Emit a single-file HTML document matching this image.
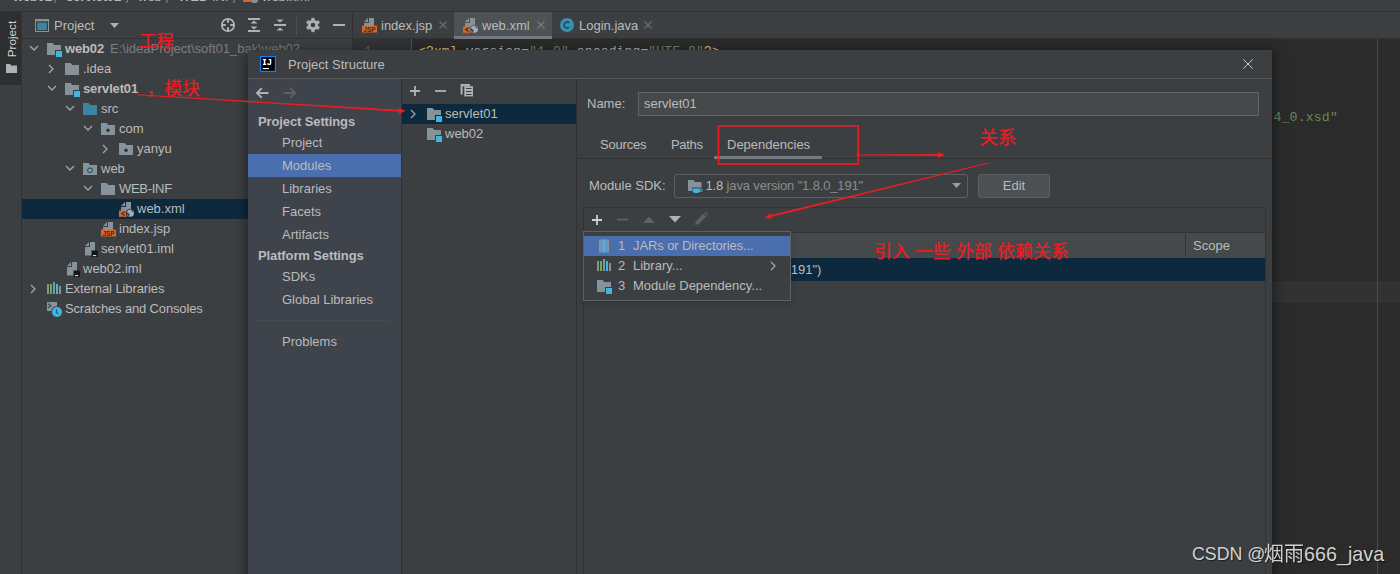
<!DOCTYPE html>
<html lang="en">
<head>
<meta charset="utf-8">
<title>Project Structure</title>
<style>
html,body{margin:0;padding:0}
body{width:1400px;height:574px;overflow:hidden;position:relative;background:#3c3f41;color:#bbbbbb;font-family:"Liberation Sans",sans-serif;font-size:13px;line-height:20px;-webkit-font-smoothing:antialiased}
.a{position:absolute}
.t{position:absolute;white-space:nowrap;line-height:20px;height:20px}
.b{font-weight:bold;letter-spacing:-.15px}
.g{color:#7d7d7d}
svg{position:absolute;overflow:visible}
.ic{width:16px;height:16px}
.row{position:absolute;left:22px;width:226px;height:20px}
.mono{font-family:"Liberation Mono",monospace;font-size:13px}
.side{position:absolute;left:34px;white-space:nowrap;line-height:23px;height:23px}
.sideh{position:absolute;left:10px;white-space:nowrap;font-weight:bold;line-height:20px;letter-spacing:-.12px}
</style>
</head>
<body>
<svg width="0" height="0" style="position:absolute">
<defs>
<symbol id="folder" viewBox="0 0 16 16"><path d="M1 2h5.6l1.6 2H15v10H1z" fill="#87939a"/></symbol>
<symbol id="modfolder" viewBox="0 0 16 16"><path d="M1 2h5.6l1.6 2H15v5H9v5H1z" fill="#87939a"/><rect x="10" y="10" width="6" height="6" fill="#40b6e0"/></symbol>
<symbol id="srcfolder" viewBox="0 0 16 16"><path d="M1 2h5.6l1.6 2H15v10H1z" fill="#3b85a3"/></symbol>
<symbol id="pkgfolder" viewBox="0 0 16 16"><path d="M1 2h5.6l1.6 2H15v10H1z" fill="#87939a"/><circle cx="8" cy="9.300" r="1.700" fill="#2f3234"/></symbol>
<symbol id="webfolder" viewBox="0 0 16 16"><path d="M1 2h5.6l1.6 2H15v10H1z" fill="#87939a"/><circle cx="8" cy="9.300" r="2.700" fill="#3c3f41"/><circle cx="8" cy="9.300" r="1.800" fill="#40b6e0"/></symbol>
<symbol id="chev-d" viewBox="0 0 16 16"><path d="M4 6l4 4 4-4" fill="none" stroke="#a4a6a8" stroke-width="1.3"/></symbol>
<symbol id="chev-r" viewBox="0 0 16 16"><path d="M6 4l4 4-4 4" fill="none" stroke="#a4a6a8" stroke-width="1.3"/></symbol>
<symbol id="xmlfile" viewBox="0 0 16 16"><path d="M7 1L3 5h4z" fill="#87939a"/><path d="M8 1h5v9H3V6h5z" fill="#87939a"/><rect x="1" y="9.500" width="8.300" height="6.300" fill="#d8672b"/><path d="M6.800 10.700L3.600 12.600l3.200 1.900" fill="none" stroke="#3a2a20" stroke-width="1.100"/><circle cx="12.300" cy="12.200" r="4.500" fill="currentColor"/><circle cx="12.300" cy="12.200" r="3.600" fill="#a3b0b8"/><path d="M9.200 10.700a3.600 3.600 0 0 0 1.900 4.900c-.3-1 .9-1.400.6-2.300s-1.700-1.300-2.500-2.600z" fill="#3a4852"/><path d="M12.300 8.700c.3.800 1.200.9 1.400 1.700s.900 1 1.700.8a3.600 3.600 0 0 0-3.100-2.500z" fill="#3a4852"/></symbol>
<symbol id="jspfile" viewBox="0 0 16 16"><path d="M7 1L3.500 4.500V5H7z" fill="#87939a"/><path d="M8 1h5v8H3V6h5z" fill="#87939a"/><rect x="1" y="8.700" width="15" height="6.800" fill="#d8672b"/><text x="8.500" y="14.500" font-family="Liberation Sans" font-weight="bold" font-size="6.400" text-anchor="middle" fill="#3a2a20">JSP</text></symbol>
<symbol id="imlfile" viewBox="0 0 16 16"><path d="M7 1L3 5h4z" fill="#87939a"/><path d="M8 1h5v13.500H3V6h5z" fill="#87939a"/><rect x="9.500" y="9.500" width="7" height="6.700" fill="#161616"/><rect x="11" y="14" width="3.200" height="1.100" fill="#d8d8d8"/></symbol>
<symbol id="libs" viewBox="0 0 16 16"><rect x="1" y="3" width="2" height="10" fill="#87939a"/><rect x="4" y="3" width="2" height="10" fill="#62b543"/><rect x="7" y="1" width="2" height="12" fill="#87939a"/><rect x="10" y="3" width="2" height="10" fill="#40b6e0"/><rect x="13" y="5" width="2" height="8" fill="#87939a"/></symbol>
</defs>
</svg>

<!-- ===== top breadcrumb bar (cut off) ===== -->
<div class="a" style="left:0;top:0;width:1400px;height:11px;background:#3c3f41;overflow:hidden">
  <div class="t b" style="left:13px;top:-13px;font-size:13px;color:#bbb">web02</div>
  <div class="t" style="left:54px;top:-11px;color:#888">/</div>
  <div class="t b" style="left:66px;top:-13px;">servlet01</div>
  <div class="t" style="left:126px;top:-11px;color:#888">/</div>
  <div class="t" style="left:138px;top:-13px;">web</div>
  <div class="t" style="left:166px;top:-11px;color:#888">/</div>
  <div class="t" style="left:178px;top:-13px;">WEB-INF</div>
  <div class="t" style="left:233px;top:-11px;color:#888">/</div>
  <div class="a" style="left:243px;top:0;width:8px;height:2px;background:#d8672b"></div>
  <div class="a" style="left:251px;top:0;width:7px;height:3px;background:#87939a;border-radius:0 0 3px 3px"></div>
  <div class="t" style="left:262px;top:-13px;">web.xml</div>
</div>
<div class="a" style="left:0;top:11px;width:1400px;height:1px;background:#323232"></div>

<!-- ===== left tool strip ===== -->
<div class="a" style="left:0;top:12px;width:21px;height:562px;background:#3c3f41"></div>
<div class="a" style="left:0;top:12px;width:21px;height:73px;background:#2d2f30"></div>
<div class="a" style="left:21px;top:12px;width:1px;height:562px;background:#323232"></div>
<div class="a" style="left:0;top:0;width:0;height:0"><div class="t" style="left:-7.700px;top:29.300px;width:40px;text-align:center;font-size:11.700px;color:#d4d4d4;transform:rotate(-90deg);transform-origin:center center;">Project</div></div>
<svg style="left:6px;top:64px" width="11" height="9" viewBox="0 0 12 10" preserveAspectRatio="none"><path d="M0 0h4.4l1.2 1.6H12V10H0z" fill="#afb1b3"/></svg>

<!-- ===== project tool window ===== -->
<div class="a" id="proj" style="left:22px;top:12px;width:330px;height:562px;background:#3c3f41"></div>
<div class="a" style="left:22px;top:38px;width:330px;height:1px;background:#323232"></div>
<div class="a" style="left:352px;top:12px;width:1px;height:562px;background:#323232"></div>
<!-- toolbar -->
<svg style="left:35px;top:19px" width="14" height="13" viewBox="0 0 14 13"><rect x=".5" y=".5" width="13" height="12" fill="none" stroke="#87939a"/><rect x="0" y="0" width="14" height="2.300" fill="#87939a"/><rect x="2.200" y="3.600" width="9.600" height="7.400" fill="#3b85a3"/></svg>
<div class="t" style="left:54px;top:16px">Project</div>
<svg style="left:110px;top:23px" width="9" height="5" viewBox="0 0 9 5"><path d="M0 0h9L4.5 5z" fill="#afb1b3"/></svg>
<!-- locate -->
<svg style="left:220px;top:17px" width="16" height="16" viewBox="0 0 16 16"><circle cx="8" cy="8" r="6.2" fill="none" stroke="#afb1b3" stroke-width="1.8"/><path d="M8 1.500v4.300M8 10.200v4.300M1.500 8h4.300M10.200 8h4.300" stroke="#afb1b3" stroke-width="2"/></svg>
<!-- expand all -->
<svg style="left:246px;top:17px" width="16" height="16" viewBox="0 0 16 16"><path d="M2 2h12M2 14h12" stroke="#afb1b3" stroke-width="2"/><path d="M8 3.600l3.600 3H4.400zM8 12.400l3.600-3H4.400z" fill="#afb1b3"/></svg>
<!-- collapse all -->
<svg style="left:272px;top:17px" width="16" height="16" viewBox="0 0 16 16"><path d="M2 8h12" stroke="#afb1b3" stroke-width="2"/><path d="M8 5.500l3.600-3.100H4.400zM8 10.500l3.600 3.100H4.400z" fill="#afb1b3"/></svg>
<div class="a" style="left:296px;top:15px;width:1px;height:20px;background:#515151"></div>
<!-- gear -->
<svg style="left:305px;top:17px" width="16" height="16" viewBox="0 0 16 16"><path d="M6.440 3.360L6.710 1.220L9.290 1.220L9.560 3.360L11.240 4.320L13.220 3.490L14.520 5.730L12.800 7.030L12.800 8.970L14.520 10.270L13.220 12.510L11.240 11.680L9.560 12.640L9.290 14.780L6.710 14.780L6.440 12.640L4.760 11.680L2.780 12.510L1.480 10.270L3.200 8.970L3.200 7.030L1.480 5.730L2.780 3.490L4.760 4.320z" fill="#afb1b3" stroke="#afb1b3" stroke-width=".6" stroke-linejoin="round"/><circle cx="8" cy="8" r="2.300" fill="#3c3f41"/></svg>
<div class="a" style="left:333px;top:24px;width:12px;height:2px;background:#afb1b3"></div>

<!-- tree -->
<div class="row" style="top:199px;background:#0d293e"></div>
<svg class="ic" style="left:26px;top:40px"><use href="#chev-d"/></svg>
<svg class="ic" style="left:46px;top:41px"><use href="#modfolder"/></svg>
<div class="t b" style="left:65px;top:39px">web02</div>
<div class="t g" style="left:110px;top:39px">E:\ideaProject\soft01_bak\web02</div>

<svg class="ic" style="left:43px;top:61px"><use href="#chev-r"/></svg>
<svg class="ic" style="left:64px;top:61px"><use href="#folder"/></svg>
<div class="t" style="left:83px;top:59px">.idea</div>

<svg class="ic" style="left:44px;top:80px"><use href="#chev-d"/></svg>
<svg class="ic" style="left:64px;top:81px"><use href="#modfolder"/></svg>
<div class="t b" style="left:83px;top:79px">servlet01</div>

<svg class="ic" style="left:62px;top:100px"><use href="#chev-d"/></svg>
<svg class="ic" style="left:82px;top:101px"><use href="#srcfolder"/></svg>
<div class="t" style="left:101px;top:99px">src</div>

<svg class="ic" style="left:80px;top:120px"><use href="#chev-d"/></svg>
<svg class="ic" style="left:100px;top:121px"><use href="#pkgfolder"/></svg>
<div class="t" style="left:119px;top:119px">com</div>

<svg class="ic" style="left:97px;top:141px"><use href="#chev-r"/></svg>
<svg class="ic" style="left:118px;top:141px"><use href="#pkgfolder"/></svg>
<div class="t" style="left:137px;top:139px">yanyu</div>

<svg class="ic" style="left:62px;top:160px"><use href="#chev-d"/></svg>
<svg class="ic" style="left:82px;top:161px"><use href="#webfolder"/></svg>
<div class="t" style="left:101px;top:159px">web</div>

<svg class="ic" style="left:80px;top:180px"><use href="#chev-d"/></svg>
<svg class="ic" style="left:100px;top:181px"><use href="#folder"/></svg>
<div class="t" style="left:119px;top:179px;letter-spacing:-.3px">WEB-INF</div>

<svg class="ic" style="left:118px;top:201px;color:#0d293e"><use href="#xmlfile"/></svg>
<div class="t" style="left:137px;top:199px">web.xml</div>

<svg class="ic" style="left:100px;top:221px"><use href="#jspfile"/></svg>
<div class="t" style="left:119px;top:219px">index.jsp</div>

<svg class="ic" style="left:82px;top:241px"><use href="#imlfile"/></svg>
<div class="t" style="left:101px;top:239px">servlet01.iml</div>

<svg class="ic" style="left:64px;top:261px"><use href="#imlfile"/></svg>
<div class="t" style="left:83px;top:259px">web02.iml</div>

<svg class="ic" style="left:25px;top:281px"><use href="#chev-r"/></svg>
<svg class="ic" style="left:46px;top:281px"><use href="#libs"/></svg>
<div class="t" style="left:65px;top:279px;letter-spacing:-.1px">External Libraries</div>

<svg class="ic" style="left:46px;top:301px" viewBox="0 0 16 16"><path d="M1 1h10v4.200a6 6 0 0 0-5.800 4.800H1z" fill="#87939a"/><path d="M2.300 2.800l2.600 2-2.600 2" fill="none" stroke="#3c3f41" stroke-width="1.100"/><circle cx="11" cy="11" r="5" fill="#40b6e0"/><path d="M10.500 8.300v3.200l1.800 1.500" fill="none" stroke="#2d5a70" stroke-width="1.200"/></svg>
<div class="t" style="left:65px;top:299px;letter-spacing:-.15px">Scratches and Consoles</div>

<!-- ===== editor ===== -->
<div class="a" style="left:353px;top:12px;width:1047px;height:26px;background:#3c3f41"></div>
<div class="a" style="left:353px;top:38px;width:1047px;height:1px;background:#323232"></div>
<div class="a" style="left:454px;top:12px;width:98px;height:27px;background:#4e5254"></div>
<div class="a" style="left:454px;top:36px;width:98px;height:3px;background:#747a80"></div>
<svg class="ic" style="left:361px;top:17px"><use href="#jspfile"/></svg>
<div class="t" style="left:381px;top:16px">index.jsp</div>
<svg style="left:439px;top:21px" width="8" height="8" viewBox="0 0 8 8"><path d="M.5.5l7 7M7.500.5l-7 7" stroke="#6e6e6e" stroke-width="1.1"/></svg>
<svg class="ic" style="left:462px;top:17px;color:#4e5254"><use href="#xmlfile"/></svg>
<div class="t" style="left:482px;top:16px">web.xml</div>
<svg style="left:537px;top:21px" width="8" height="8" viewBox="0 0 8 8"><path d="M.5.5l7 7M7.500.5l-7 7" stroke="#7a7d7f" stroke-width="1.1"/></svg>
<svg style="left:560px;top:18px" width="14" height="14" viewBox="0 0 14 14"><circle cx="7" cy="7" r="7" fill="#3592b5"/><path d="M9.300 4.900A3 3 0 1 0 9.300 9.100" fill="none" stroke="#23393f" stroke-width="1.3"/></svg>
<div class="t" style="left:579px;top:16px">Login.java</div>
<svg style="left:644px;top:21px" width="8" height="8" viewBox="0 0 8 8"><path d="M.5.5l7 7M7.500.5l-7 7" stroke="#6e6e6e" stroke-width="1.1"/></svg>

<div class="a" style="left:353px;top:39px;width:1047px;height:535px;background:#2b2b2b"></div>
<div class="a" style="left:353px;top:39px;width:58px;height:535px;background:#313335"></div>
<div class="a" style="left:411px;top:39px;width:1px;height:535px;background:#555555"></div>
<div class="a" style="left:412px;top:281px;width:988px;height:22px;background:#323232"></div>
<div class="a" style="left:1377px;top:39px;width:1px;height:535px;background:#4b4b4b"></div>
<div class="t mono" style="left:364px;top:42px;color:#606366">1</div>
<div class="t mono" style="left:418px;top:42px;letter-spacing:.14px;color:#e8bf6a">&lt;?<span>xml</span><span style="color:#bababa"> version=</span><span style="color:#6a8759">"1.0"</span><span style="color:#bababa"> encoding=</span><span style="color:#6a8759">"UTF-8"</span>?&gt;</div>
<div class="t mono" style="left:1273.500px;top:107.500px;letter-spacing:.14px;font-size:13.200px;color:#6a8759">4_0.xsd"</div>

<!-- ===== Project Structure dialog ===== -->
<div class="a" id="dlg" style="left:248px;top:50px;width:1024px;height:560px;background:#3c3f41;box-shadow:0 3px 12px 1px rgba(0,0,0,.5)">
  <!-- title bar -->
  <svg style="left:12px;top:6px" width="16" height="16" viewBox="0 0 16 16"><rect x=".6" y=".6" width="14.800" height="14.800" fill="#000" stroke="#1580f5" stroke-width="1.200"/><path d="M2.900 2.900h3.300v1.300H5.300v3.600h.9v1.300H2.900V7.800h.9V4.200h-.9z" fill="#fff"/><path d="M8.600 2.900h2.700v4.300a1.900 1.900 0 0 1-1.900 1.900h-.4a2.100 2.100 0 0 1-2.100-1.500l1.300-.5a.8.8 0 0 0 .8.600h.3a.5.5 0 0 0 .5-.5V4.200H8.600z" fill="#fff"/><rect x="2.900" y="12" width="6.100" height="1.150" fill="#fff"/></svg>
  <div class="t" style="left:40px;top:5px">Project Structure</div>
  <svg style="left:995px;top:9px" width="10" height="10" viewBox="0 0 10 10"><path d="M.3.3l9.400 9.400M9.700.3L.3 9.700" stroke="#c4c4c4" stroke-width="1"/></svg>
  <div class="a" style="left:0;top:28px;width:1024px;height:1px;background:#555759"></div>

  <!-- sidebar -->
  <div class="a" style="left:0;top:29px;width:153px;height:540px;background:#3e434c"></div>
  <div class="a" style="left:153px;top:29px;width:1px;height:540px;background:#323232"></div>
  <svg style="left:7px;top:36px" width="14" height="14" viewBox="0 0 14 14"><path d="M13.500 7H2M6.800 2.200L2 7l4.800 4.800" fill="none" stroke="#afb1b3" stroke-width="1.900"/></svg>
  <svg style="left:35px;top:36px" width="14" height="14" viewBox="0 0 14 14"><path d="M.5 7H12M7.200 2.200L12 7l-4.800 4.800" fill="none" stroke="#5d6164" stroke-width="1.900"/></svg>
  <div class="sideh" style="top:62px">Project Settings</div>
  <div class="side" style="top:81px">Project</div>
  <div class="a" style="left:0;top:104px;width:153px;height:23px;background:#4b6eaf"></div>
  <div class="side" style="top:104px">Modules</div>
  <div class="side" style="top:127px">Libraries</div>
  <div class="side" style="top:150px">Facets</div>
  <div class="side" style="top:173px">Artifacts</div>
  <div class="sideh" style="top:196px">Platform Settings</div>
  <div class="side" style="top:215px">SDKs</div>
  <div class="side" style="top:238px">Global Libraries</div>
  <div class="a" style="left:9px;top:270px;width:132px;height:1px;background:#464b52"></div>
  <div class="side" style="top:280px">Problems</div>

  <!-- module list -->
  <div class="a" style="left:328px;top:29px;width:1px;height:540px;background:#323232"></div>
  <svg style="left:162px;top:36px" width="10" height="10" viewBox="0 0 10 10"><path d="M5 0v10M0 5h10" stroke="#afb1b3" stroke-width="1.800"/></svg>
  <svg style="left:187px;top:36px" width="11" height="10" viewBox="0 0 11 10"><path d="M0 5h11" stroke="#afb1b3" stroke-width="1.800"/></svg>
  <svg style="left:212px;top:33px" width="14" height="15" viewBox="0 0 14 15"><path d="M.6 1H10v2.200H2.600v8.400H.6z" fill="#afb1b3"/><rect x="4.300" y="3.200" width="8.700" height="10.200" fill="#afb1b3"/><path d="M6 5.500h5.500M6 8.500h5.500M6 11.500h5.500" stroke="#3c3f41" stroke-width="1.200"/></svg>
  <div class="a" style="left:154px;top:54px;width:174px;height:20px;background:#0d293e"></div>
  <svg class="ic" style="left:157px;top:56px"><use href="#chev-r"/></svg>
  <svg class="ic" style="left:178px;top:56px"><use href="#modfolder"/></svg>
  <div class="t" style="left:197px;top:54px">servlet01</div>
  <svg class="ic" style="left:178px;top:76px"><use href="#modfolder"/></svg>
  <div class="t" style="left:197px;top:74px">web02</div>

  <!-- right panel -->
  <div class="t" style="left:339px;top:44px">Name:</div>
  <div class="a" style="left:390px;top:42px;width:619px;height:22px;background:#45494a;border:1px solid #646464"></div>
  <div class="t" style="left:396px;top:44px">servlet01</div>

  <div class="t" style="left:352px;top:85px;letter-spacing:-.2px">Sources</div>
  <div class="t" style="left:423px;top:85px;letter-spacing:-.3px">Paths</div>
  <div class="t" style="left:479px;top:85px">Dependencies</div>
  <div class="a" style="left:329px;top:108px;width:695px;height:1px;background:#323232"></div>
  <div class="a" style="left:466px;top:106px;width:108px;height:3px;background:#747a80"></div>

  <div class="t" style="left:341px;top:126px">Module SDK:</div>
  <div class="a" style="left:426px;top:124px;width:292px;height:22px;background:#3c3f41;border:1px solid #5e6060;border-radius:3px"></div>
  <svg class="ic" style="left:439px;top:127px" viewBox="0 0 16 16"><path d="M1 3h5.600l1.600 2h6.300v5.500H5v3.500H1z" fill="#87939a"/><path d="M5.500 11.500h7.500v1.800a2.700 2.700 0 0 1-2.700 2.700H8.200a2.700 2.700 0 0 1-2.700-2.700z" fill="#40b6e0"/><path d="M13 12.200h1.200a1.150 1.150 0 0 1 0 2.300H12.800" fill="none" stroke="#40b6e0" stroke-width="1"/></svg>
  <div class="t" style="left:457.500px;top:126px;letter-spacing:-.15px">1.8 <span style="color:#8c8c8c">java version "1.8.0_191"</span></div>
  <svg style="left:704px;top:133px" width="9" height="5" viewBox="0 0 9 5"><path d="M0 0h9L4.500 5z" fill="#9a9da0"/></svg>
  <div class="a" style="left:730px;top:124px;width:70px;height:22px;background:#4c5052;border:1px solid #5e6060;border-radius:3px"></div>
  <div class="t" style="left:730px;top:126px;width:72px;text-align:center">Edit</div>

  <!-- dependencies panel -->
  <div class="a" style="left:335px;top:157px;width:681px;height:420px;border:1px solid #323232;background:#3c3f41"></div>
  <div class="a" style="left:336px;top:182px;width:681px;height:1px;background:#323232"></div>
  <svg style="left:344px;top:164.500px" width="10" height="10" viewBox="0 0 10 10"><path d="M5 0v10M0 5h10" stroke="#d0d0d0" stroke-width="1.800"/></svg>
  <svg style="left:369px;top:164px" width="11" height="11" viewBox="0 0 11 11"><path d="M0 5.500h11" stroke="#5d6164" stroke-width="1.800"/></svg>
  <svg style="left:395px;top:166px" width="12" height="7" viewBox="0 0 12 7"><path d="M0 7h12L6 .5z" fill="#5d6164"/></svg>
  <svg style="left:421px;top:166px" width="12" height="7" viewBox="0 0 12 7"><path d="M0 0h12L6 6.500z" fill="#afb1b3"/></svg>
  <svg style="left:446px;top:162px" width="14" height="14" viewBox="0 0 14 14"><path d="M1 13l.8-3.500L9.500 1.800l2.700 2.700L4.500 12.200zM10.300 1l1-1 2.700 2.700-1 1z" fill="#5d6164"/></svg>
  <!-- table header -->
  <div class="a" style="left:336px;top:183px;width:681px;height:25px;background:#45494a"></div>
    <div class="a" style="left:937px;top:184px;width:1px;height:22px;background:#323232"></div>
  <div class="t" style="left:945px;top:186px">Scope</div>
  <div class="a" style="left:336px;top:208px;width:681px;height:23px;background:#0d293e"></div>
  <svg class="ic" style="left:374px;top:211px" viewBox="0 0 16 16"><path d="M1 2h5.600l1.600 2H15v10H1z" fill="#87939a"/></svg>
  <div class="t" style="left:403px;top:210px">1.8 (java version "1.8.0_191")</div>

  <!-- popup -->
  <div class="a" style="left:335px;top:181px;width:206px;height:68px;background:#3c3f41;border:1px solid #5f6264;box-shadow:0 2px 5px rgba(0,0,0,.2)"></div>
  <div class="a" style="left:336px;top:186px;width:206px;height:20px;background:#4b6eaf"></div>
  <svg class="ic" style="left:348px;top:188px" viewBox="0 0 16 16"><rect x="3" y="1.500" width="2.500" height="13" fill="#87939a"/><rect x="10.500" y="1.500" width="2.500" height="13" fill="#87939a"/><rect x="5.500" y="1.500" width="5" height="13" fill="#5da3cf"/><path d="M8 1.500v13" stroke="#40b6e0" stroke-width="2.200" stroke-dasharray="1 1"/></svg>
  <div class="t" style="left:370px;top:186px">1</div>
  <div class="t" style="left:385px;top:186px;letter-spacing:-.1px">JARs or Directories...</div>
  <svg class="ic" style="left:348px;top:208px"><use href="#libs"/></svg>
  <div class="t" style="left:370px;top:206px">2</div>
  <div class="t" style="left:385px;top:206px">Library...</div>
  <svg class="ic" style="left:517px;top:208px"><use href="#chev-r"/></svg>
  <svg class="ic" style="left:348px;top:228px"><use href="#modfolder"/></svg>
  <div class="t" style="left:370px;top:226px">3</div>
  <div class="t" style="left:385px;top:226px">Module Dependency...</div>
</div>

<!-- ===== red annotations ===== -->
<svg style="left:0;top:0" width="1400" height="574" viewBox="0 0 1400 574">
  <g stroke="#ed1c24" fill="none" stroke-width="1.300">
                <rect x="718.500" y="125.900" width="139.700" height="38.200" stroke-width="1.600"/>
  </g>
  <g fill="#ed1c24">
    <path d="M136.97 95.25L399.94 111.80L400.06 109.70L137.03 94.35z"/>
    <path d="M855.50 155.60L939.00 156.10L939.00 153.90L855.50 154.60z"/>
    <path d="M988.41 162.61L768.76 215.53L769.24 217.47L988.59 163.39z"/>
    <path d="M405.600 111.100l-7.200 2.900 .9-3.100-.5-3.200z"/>
    <path d="M945.300 155l-7.600 2.900 .8-2.900-.8-2.900z"/>
    <path d="M764.500 217.700l6.300-4.700-.2 3 1.700 2.700z"/>
  </g>
  <g fill="#ed1c24" stroke="#ed1c24" stroke-width="0.2" font-family="'Liberation Sans','Noto Sans CJK SC',sans-serif">
    <text x="139.3" y="47.3" font-size="17.2">工程</text>
    <text x="146.5" y="95" font-size="17.2">，</text>
    <text x="164.4" y="94.9" font-size="17.8">模块</text>
    <text x="979.5" y="144.1" font-size="18.4">关系</text>
    <text x="874" y="257.9" font-size="17.9"><tspan x="874">引入</tspan> <tspan x="915.1">一些</tspan> <tspan x="956.2">外部</tspan> <tspan x="997.3">依赖关系</tspan></text>
  </g>
</svg>

<!-- ===== watermark ===== -->
<div class="t" style="left:1192px;top:542.900px;font-size:17.800px;line-height:22px;height:22px;color:#d2d2d2;text-shadow:1px 1px 1px rgba(0,0,0,.55)">CSDN @</div>
<svg style="left:0;top:0;filter:drop-shadow(1px 1px .6px rgba(0,0,0,.55))" width="1400" height="574" viewBox="0 0 1400 574">
  <text x="1264" y="561" font-size="19.9" fill="#d2d2d2" font-family="'Liberation Sans','Noto Sans CJK SC',sans-serif">烟雨</text>
</svg>
<div class="t" style="left:1304px;top:542.900px;font-size:19.750px;line-height:22px;height:22px;color:#d2d2d2;text-shadow:1px 1px 1px rgba(0,0,0,.55)">666_java</div>

</body>
</html>
